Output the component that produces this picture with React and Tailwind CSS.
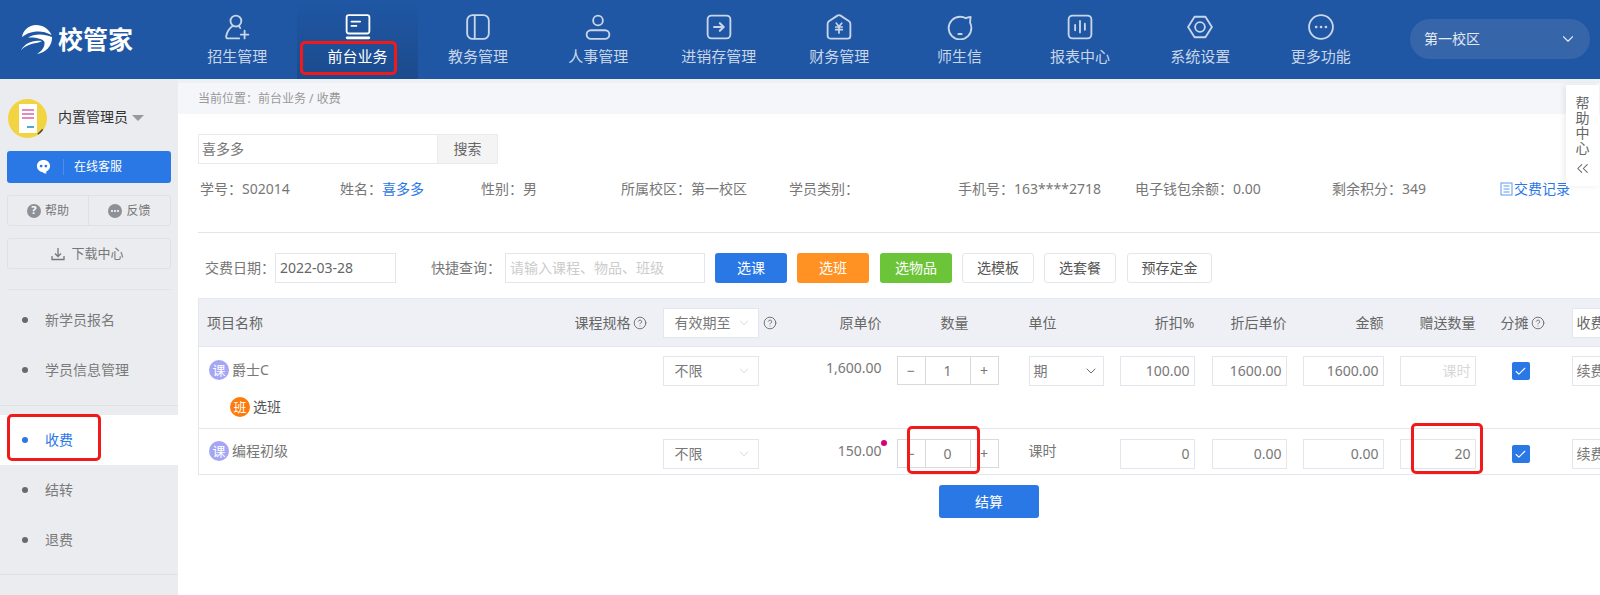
import React from "react";
import { ChevronDown, ChevronsLeft, CircleHelp, Check } from "lucide-react";

const iconProps = {
  width: 26,
  height: 26,
  viewBox: "0 0 24 24",
  fill: "none",
  stroke: "currentColor",
  strokeWidth: 1.7,
  strokeLinecap: "round",
  strokeLinejoin: "round",
};

const navItems = [
  {
    label: "招生管理",
    icon: (
      <svg {...iconProps}>
        <circle cx="11" cy="6.5" r="5" />
        <path d="M8 11C5 13 2.8 16.500 2 20.500C1.800 21.800 2.500 22.500 3.500 22.500H14" />
        <path d="M14 11.500L15 13" />
        <path d="M19 15.500V22.500M15.500 19H22.500" />
      </svg>
    ),
  },
  {
    label: "前台业务",
    active: true,
    icon: (
      <svg {...iconProps} stroke="#ffffff">
        <rect x="1.500" y="1" width="21" height="17" rx="2" />
        <path d="M6 7H14M6 11H10.500" />
        <path d="M2 22H22" strokeWidth="2.600" />
      </svg>
    ),
  },
  {
    label: "教务管理",
    icon: (
      <svg {...iconProps}>
        <rect x="2" y="1" width="20" height="22" rx="5" />
        <path d="M9 1.500V22.500" />
      </svg>
    ),
  },
  {
    label: "人事管理",
    icon: (
      <svg {...iconProps}>
        <circle cx="12" cy="6" r="4.500" />
        <rect x="1.500" y="15" width="21" height="8" rx="4" />
      </svg>
    ),
  },
  {
    label: "进销存管理",
    icon: (
      <svg {...iconProps}>
        <rect x="1.500" y="1.500" width="21" height="21" rx="3.500" />
        <path d="M7.500 12H16M12.800 8.500L16.300 12L12.800 15.500" strokeWidth="2" />
      </svg>
    ),
  },
  {
    label: "财务管理",
    icon: (
      <svg {...iconProps}>
        <path d="M10.500 1.500C11.400 0.900 12.600 0.900 13.500 1.500L21 6.500C22 7.200 22.500 8 22.500 9V20C22.500 21.500 21.500 22.700 20 22.700H4C2.500 22.700 1.500 21.500 1.500 20V9C1.500 8 2 7.200 3 6.500Z" />
        <path d="M9.500 8.500L12 11.500L14.500 8.500M9 12H15M9 14.500H15M12 11.500V17.500" strokeWidth="1.600" />
      </svg>
    ),
  },
  {
    label: "师生信",
    icon: (
      <svg {...iconProps}>
        <path d="M12 2.500C14 2.500 16 3 17.500 4C18.500 3.200 20 2.800 21.800 2.800C21.500 4.500 21.500 6 21.300 8C22 9.500 22.500 11 22.500 13A10.500 10.500 0 1 1 12 2.500Z" />
        <path d="M10.500 18.500H13.500" />
      </svg>
    ),
  },
  {
    label: "报表中心",
    icon: (
      <svg {...iconProps}>
        <rect x="1.500" y="1.500" width="21" height="21" rx="3.500" />
        <path d="M7.500 10V15M12 6.500V17M16.500 9V14.500" />
      </svg>
    ),
  },
  {
    label: "系统设置",
    icon: (
      <svg {...iconProps}>
        <path d="M7 2.500H17L23 12L17 21.500H7L1 12Z" />
        <circle cx="12" cy="12" r="4.500" />
      </svg>
    ),
  },
  {
    label: "更多功能",
    icon: (
      <svg {...iconProps}>
        <circle cx="12" cy="12" r="11" />
        <path d="M7.500 12H7.600M12 12H12.100M16.500 12H16.600" strokeWidth="2.400" />
      </svg>
    ),
  },
];

const infoItems = [
  { label: "学号：S02014", width: "w-[140px]" },
  { label: "姓名：", name: "喜多多", width: "w-[141px]" },
  { label: "性别：男", width: "w-[140px]" },
  { label: "所属校区：第一校区", width: "w-[168px]" },
  { label: "学员类别：", width: "w-[169px]" },
  { label: "手机号：163****2718", width: "w-[177px]" },
  { label: "电子钱包余额：0.00", width: "w-[197px]" },
  { label: "剩余积分：349", width: "w-[168px]" },
];

function Logo() {
  return (
    <div className="flex items-center gap-[5px] ml-[20px] w-[155px] shrink-0">
      <svg width="33" height="30" viewBox="0 0 33 30" fill="#ffffff">
        <path d="M2 12C3 5 9 0 16 0C23 0 29 4 31.500 10C26 7 21 6 16 6.500C10 7 6 9 2 12Z" />
        <path d="M8 12.500C14 8.500 24 8.500 32 12C32.500 20 26 28 17 29C22 26 25 22 24.500 17C23 13.500 15 12 8 12.500Z" />
        <path d="M1 25C5 18 13 14.500 22 16C19 18 14 18 10 19.500C6 21 3 23 1 25Z" />
      </svg>
      <span className="text-[25px] font-bold text-white leading-none whitespace-nowrap">校管家</span>
    </div>
  );
}

function Header() {
  return (
    <header className="h-[79px] bg-[#1f57a4] flex items-stretch">
      <Logo />
      <nav className="flex w-[1204px] shrink-0 ml-[2px]">
        {navItems.map((item) => (
          <div
            key={item.label}
            className={`relative w-[120.4px] flex flex-col items-center pt-[14px] ${
              item.active
                ? "bg-gradient-to-b from-[#1f57a4] to-[#1c4b8d] text-white"
                : "text-[#c9d6e9]"
            }`}
          >
            {item.icon}
            <span className="mt-[6px] text-[15px] leading-5 whitespace-nowrap">{item.label}</span>
            {item.active && (
              <span className="absolute left-[3px] top-[41px] w-[97px] h-[34px] border-[3px] border-[#f01a1a] rounded-[5px]" />
            )}
          </div>
        ))}
      </nav>
      <div className="ml-[29px] mt-[19px] w-[180px] h-[40px] rounded-[20px] bg-[#3765a9] flex items-center justify-between pl-[14px] pr-[13px] text-sm text-[#e4eaf4]">
        <span>第一校区</span>
        <ChevronDown size={18} strokeWidth={1.5} />
      </div>
    </header>
  );
}

function Avatar() {
  return (
    <div className="relative w-[39px] h-[39px] rounded-full bg-[#f2d443] overflow-hidden flex justify-center shrink-0">
      <div className="mt-[5px] w-[18px] h-[29px] bg-white flex flex-col gap-[2px] px-[3px] pt-[5px]">
        <span className="h-[2px] bg-[#e08ac0]" />
        <span className="h-[2px] bg-[#e08ac0]" />
        <span className="h-[2px] bg-[#e08ac0]" />
        <span className="h-[2px] w-[7px] ml-auto mt-[5px] bg-[#4fa8d8]" />
      </div>
      <span className="absolute right-[3px] bottom-[5px] w-[7px] h-[2px] bg-[#5a5030] -rotate-45" />
    </div>
  );
}

function MenuItem({ label, active }) {
  return (
    <div className={`relative h-[50px] flex items-center pl-[22px] ${active ? "bg-white text-[#2a78e6]" : "text-[#7a7a7a]"}`}>
      <span className={`w-[6px] h-[6px] rounded-full ${active ? "bg-[#2a78e6]" : "bg-[#666a70]"}`} />
      <span className="ml-[17px] text-sm">{label}</span>
      {active && (
        <span className="absolute left-[7px] top-[-1px] w-[94px] h-[47px] border-[3px] border-[#f01a1a] rounded-[5px]" />
      )}
    </div>
  );
}

function Sidebar() {
  return (
    <aside className="w-[178px] shrink-0 bg-[#ebecf0] h-[516px]">
      <div className="flex items-center pl-[8px] pt-[20px]">
        <Avatar />
        <span className="ml-[11px] -mt-[3px] text-sm text-[#333]">内置管理员</span>
        <span className="ml-[4px] -mt-[1px] w-0 h-0 border-x-[6px] border-x-transparent border-t-[6px] border-t-[#999]" />
      </div>
      <div className="mx-[7px] mt-[13px] h-[32px] bg-[#2a78e6] rounded-[3px] flex items-center text-white text-xs">
        <svg className="ml-[29px]" width="15" height="16" viewBox="0 0 16 17" fill="#ffffff">
          <path d="M8 1C3.800 1 1 3.800 1 7.500C1 11 3.500 13.500 7 14C8 14.800 10 15.800 11.500 15.500C10.800 15 10.800 14 11 13.300C13.500 12.300 15 10.300 15 7.500C15 3.800 12.200 1 8 1Z" />
          <circle cx="5.500" cy="7.500" r="1.500" fill="#2a78e6" />
          <circle cx="10.500" cy="7.500" r="1.500" fill="#2a78e6" />
        </svg>
        <span className="ml-[12px] w-px h-[16px] bg-[#4a8dea]" />
        <span className="ml-[10px]">在线客服</span>
      </div>
      <div className="mx-[7px] mt-[12px] h-[31px] border border-[#e0e1e6] rounded-[3px] flex text-xs text-[#777]">
        <div className="w-[81px] flex items-center justify-center gap-[4px] border-r border-[#e0e1e6]">
          <span className="w-[14px] h-[14px] rounded-full bg-[#8e9097] text-white text-[11px] font-bold flex items-center justify-center">?</span>
          帮助
        </div>
        <div className="flex-1 flex items-center justify-center gap-[4px]">
          <span className="w-[14px] h-[14px] rounded-full bg-[#8e9097] flex items-center justify-center gap-[1px]">
            <span className="w-[2px] h-[2px] bg-white rounded-full" />
            <span className="w-[2px] h-[2px] bg-white rounded-full" />
            <span className="w-[2px] h-[2px] bg-white rounded-full" />
          </span>
          反馈
        </div>
      </div>
      <div className="mx-[7px] mt-[12px] h-[31px] border border-[#e0e1e6] rounded-[3px] flex items-center justify-center gap-[6px] pr-[3px] text-[13px] text-[#777]">
        <svg width="14" height="14" viewBox="0 0 14 14" fill="none" stroke="#777" strokeWidth="1.300">
          <path d="M7 1V9M4 6.500L7 9.500L10 6.500M1 9V12.500H13V9" />
        </svg>
        下载中心
      </div>
      <div className="mx-[7px] mt-[20px] border-t border-[#e2e3e7]" />
      <div className="pt-[5px]">
        <MenuItem label="新学员报名" />
        <MenuItem label="学员信息管理" />
      </div>
      <div className="mt-[10px] mb-[9px] border-t border-[#dfe0e4]" />
      <MenuItem label="收费" active />
      <MenuItem label="结转" />
      <MenuItem label="退费" />
      <div className="mt-[9px] border-t border-[#dfe0e4]" />
    </aside>
  );
}

function Field({ className = "", children }) {
  return (
    <div className={`h-[30px] border border-[#e4e6ee] bg-white flex items-center text-sm shrink-0 ${className}`}>
      {children}
    </div>
  );
}

function Toolbar() {
  return (
    <div className="mt-[20px] flex items-center h-[30px] text-sm text-[#777]">
      <span className="ml-[7px] w-[70px]">交费日期：</span>
      <Field className="w-[121px] px-[4px] text-[#666]">2022-03-28</Field>
      <span className="ml-[35px] w-[74px]">快捷查询：</span>
      <Field className="w-[200px] px-[4px] text-[#ccc]">请输入课程、物品、班级</Field>
      <button className="ml-[10px] w-[72px] h-[30px] rounded-[3px] bg-[#2a78e6] text-white text-sm">选课</button>
      <button className="ml-[10px] w-[72px] h-[30px] rounded-[3px] bg-[#ff9222] text-white text-sm">选班</button>
      <button className="ml-[11px] w-[72px] h-[30px] rounded-[3px] bg-[#6cc439] text-white text-sm">选物品</button>
      <button className="ml-[10px] w-[72px] h-[30px] rounded-[3px] border border-[#e4e6ee] text-[#555] text-sm">选模板</button>
      <button className="ml-[10px] w-[72px] h-[30px] rounded-[3px] border border-[#e4e6ee] text-[#555] text-sm">选套餐</button>
      <button className="ml-[11px] w-[85px] h-[30px] rounded-[3px] border border-[#e4e6ee] text-[#555] text-sm">预存定金</button>
    </div>
  );
}

function Badge({ text, orange }) {
  return (
    <span className={`w-[20px] h-[20px] rounded-full text-white text-[13px] leading-none flex items-center justify-center shrink-0 ${orange ? "bg-[#ff7a0a]" : "bg-[#a5a5f5]"}`}>
      {text}
    </span>
  );
}

function SelectBox({ value, dark, className = "w-[96px]" }) {
  return (
    <Field className={`${className} justify-between pr-[7px] text-[#777] ${dark ? "pl-[4px]" : "pl-[11px]"}`}>
      <span className="whitespace-nowrap">{value}</span>
      <ChevronDown size={dark ? 16 : 14} strokeWidth={1.300} className={dark ? "text-[#555] -mr-[3px]" : "text-[#ccc]"} />
    </Field>
  );
}

function Stepper({ value }) {
  return (
    <div className="w-[102px] h-[29px] border border-[#d8dade] flex items-center text-[#777] text-sm">
      <span className="w-[28px] h-full flex items-center justify-center border-r border-[#d8dade]">−</span>
      <span className="flex-1 h-full flex items-center justify-center">{value}</span>
      <span className="w-[28px] h-full flex items-center justify-center border-l border-[#d8dade]">+</span>
    </div>
  );
}

function NumField({ width, value, muted }) {
  return (
    <Field className={`${width} ml-auto justify-end pr-[4px] ${muted ? "text-[#d8d8d8]" : "text-[#777]"}`}>
      {value}
    </Field>
  );
}

function CheckBox() {
  return (
    <span className="ml-[28px] mt-[6px] w-[18px] h-[18px] rounded-[2px] bg-[#2a78e6] flex items-center justify-center">
      <Check size={13} color="#ffffff" strokeWidth={2} />
    </span>
  );
}

function FeeTable() {
  return (
    <div className="mt-[15px] overflow-hidden">
      <table className="table-fixed w-[1500px] border-collapse text-sm text-[#777] border-y border-l border-[#e6e7ec]">
        <colgroup>
          <col className="w-[329px]" />
          <col className="w-[127px]" />
          <col className="w-[135px]" />
          <col className="w-[100px]" />
          <col className="w-[132px]" />
          <col className="w-[90px]" />
          <col className="w-[92px]" />
          <col className="w-[91px]" />
          <col className="w-[97px]" />
          <col className="w-[92px]" />
          <col className="w-[80px]" />
          <col className="w-[135px]" />
        </colgroup>
        <thead>
          <tr className="h-[48px] bg-[#eff0f5] font-normal text-[#666] border-b border-[#e6e7ec]">
            <th className="font-normal text-left pl-[8px]">项目名称</th>
            <th className="font-normal text-right pr-[8px]">
              <span className="inline-flex items-center gap-[2px]">
                课程规格
                <CircleHelp size={14} strokeWidth={1.500} />
              </span>
            </th>
            <th className="font-normal pl-[8px]">
              <div className="flex items-center gap-[2px]">
                <SelectBox value="有效期至" />
                <span className="ml-[2px]">
                  <CircleHelp size={14} strokeWidth={1.500} />
                </span>
              </div>
            </th>
            <th className="font-normal text-right pr-[8px]">原单价</th>
            <th className="font-normal text-center pl-[7px] pr-[9px]">数量</th>
            <th className="font-normal text-left pl-[7px]">单位</th>
            <th className="font-normal text-right pr-[9px]">折扣%</th>
            <th className="font-normal text-right pr-[8px]">折后单价</th>
            <th className="font-normal text-right pr-[8px]">金额</th>
            <th className="font-normal text-right pr-[8px]">赠送数量</th>
            <th className="font-normal text-left pl-[17px]">
              <span className="inline-flex items-center gap-[2px]">
                分摊
                <CircleHelp size={14} strokeWidth={1.500} />
              </span>
            </th>
            <th className="font-normal text-left pl-[8px]">
              <Field className="w-[100px] pl-[4px] text-[#666]">收费类型</Field>
            </th>
          </tr>
        </thead>
        <tbody>
          <tr className="h-[82px] align-top border-b border-[#e6e7ec]">
            <td className="pl-[10px] pt-[13px]">
              <div className="flex items-center gap-[3px]">
                <Badge text="课" />
                爵士C
              </div>
              <div className="flex items-center gap-[3px] ml-[21px] mt-[17px] text-[#555]">
                <Badge text="班" orange />
                选班
              </div>
            </td>
            <td />
            <td className="pl-[8px] pt-[9px]">
              <SelectBox value="不限" />
            </td>
            <td className="text-right pr-[8px] pt-[11px]">1,600.00</td>
            <td className="pl-[7px] pt-[9px]">
              <Stepper value="1" />
            </td>
            <td className="pl-[7px] pt-[9px]">
              <SelectBox value="期" dark className="w-[75px]" />
            </td>
            <td className="pr-[9px] pt-[9px]">
              <NumField width="w-[75px]" value="100.00" />
            </td>
            <td className="pr-[8px] pt-[9px]">
              <NumField width="w-[75px]" value="1600.00" />
            </td>
            <td className="pr-[8px] pt-[9px]">
              <NumField width="w-[81px]" value="1600.00" />
            </td>
            <td className="pr-[8px] pt-[9px]">
              <NumField width="w-[76px]" value="课时" muted />
            </td>
            <td className="pt-[9px]">
              <CheckBox />
            </td>
            <td className="pl-[8px] pt-[9px]">
              <Field className="w-[100px] pl-[4px]">续费</Field>
            </td>
          </tr>
          <tr className="h-[46px] align-top">
            <td className="pl-[10px] pt-[12px]">
              <div className="flex items-center gap-[3px]">
                <Badge text="课" />
                编程初级
              </div>
            </td>
            <td />
            <td className="pl-[8px] pt-[10px]">
              <SelectBox value="不限" />
            </td>
            <td className="relative text-right pr-[8px] pt-[12px]">
              150.00
              <span className="absolute right-[3px] top-[11px] w-[6px] h-[6px] rounded-full bg-[#d6007f]" />
            </td>
            <td className="relative pl-[7px] pt-[10px]">
              <Stepper value="0" />
              <span className="absolute left-[17px] top-[-3px] w-[73px] h-[48px] border-[3px] border-[#f01a1a] rounded-[5px]" />
            </td>
            <td className="pl-[7px] pt-[12px]">课时</td>
            <td className="pr-[9px] pt-[10px]">
              <NumField width="w-[75px]" value="0" />
            </td>
            <td className="pr-[8px] pt-[10px]">
              <NumField width="w-[75px]" value="0.00" />
            </td>
            <td className="pr-[8px] pt-[10px]">
              <NumField width="w-[81px]" value="0.00" />
            </td>
            <td className="relative pr-[8px] pt-[10px]">
              <NumField width="w-[76px]" value="20" />
              <span className="absolute left-[19px] top-[-6px] w-[72px] h-[51px] border-[3px] border-[#f01a1a] rounded-[5px]" />
            </td>
            <td className="pt-[10px]">
              <CheckBox />
            </td>
            <td className="pl-[8px] pt-[10px]">
              <Field className="w-[100px] pl-[4px]">续费</Field>
            </td>
          </tr>
        </tbody>
      </table>
    </div>
  );
}

function HelpTab() {
  return (
    <div className="absolute right-[1px] top-[6px] w-[33px] h-[101px] bg-white shadow-[-2px_0_6px_rgba(0,0,0,0.08)] flex flex-col items-center pt-[10px] text-sm leading-[15px] text-[#666]">
      <span>帮</span>
      <span>助</span>
      <span>中</span>
      <span>心</span>
      <ChevronsLeft size={19} strokeWidth={1.300} className="mt-[4px]" />
    </div>
  );
}

function Main() {
  return (
    <main className="relative flex-1 min-w-0 bg-white overflow-hidden">
      <div className="h-[4px] bg-[#eef1f3]" />
      <div className="h-[31px] bg-[#f5f6fa] flex items-center pl-[20px] text-xs text-[#999]">
        当前位置：前台业务 / 收费
      </div>
      <HelpTab />
      <div className="pl-[20px] pt-[20px]">
        <div className="flex h-[30px] w-[300px]">
          <div className="w-[240px] border border-[#e9eaf0] flex items-center pl-[3px] text-sm text-[#777]">喜多多</div>
          <div className="w-[60px] border border-l-0 border-[#e9eaf0] bg-[#f4f4f5] flex items-center justify-center text-sm text-[#666]">搜索</div>
        </div>
        <div className="mt-[15px] h-[20px] flex items-center pl-[2px] text-sm text-[#777] whitespace-nowrap">
          {infoItems.map((info) => (
            <span key={info.label} className={`${info.width} shrink-0`}>
              {info.label}
              {info.name && <span className="text-[#2a78e6]">{info.name}</span>}
            </span>
          ))}
          <span className="flex items-center text-[#2a78e6]">
            <svg className="mr-[1px]" width="13" height="14" viewBox="0 0 13 14" fill="none" stroke="#5b9bef" strokeWidth="1">
              <rect x="1" y="1" width="11" height="12" />
              <path d="M3.500 4H9.500M3.500 7H9.500M3.500 10H9.500" />
            </svg>
            交费记录
          </span>
        </div>
        <div className="mt-[33px] border-t border-[#e4e5ec]" />
        <Toolbar />
        <FeeTable />
        <button className="mt-[10px] ml-[741px] w-[100px] h-[33px] rounded-[3px] bg-[#2a78e6] text-white text-sm block">结算</button>
      </div>
    </main>
  );
}

export default function App() {
  return (
    <div className="w-[1600px] h-[595px] overflow-hidden bg-white font-['Noto_Sans','Noto_Sans_CJK_SC',sans-serif]">
      <Header />
      <div className="flex">
        <Sidebar />
        <Main />
      </div>
    </div>
  );
}
